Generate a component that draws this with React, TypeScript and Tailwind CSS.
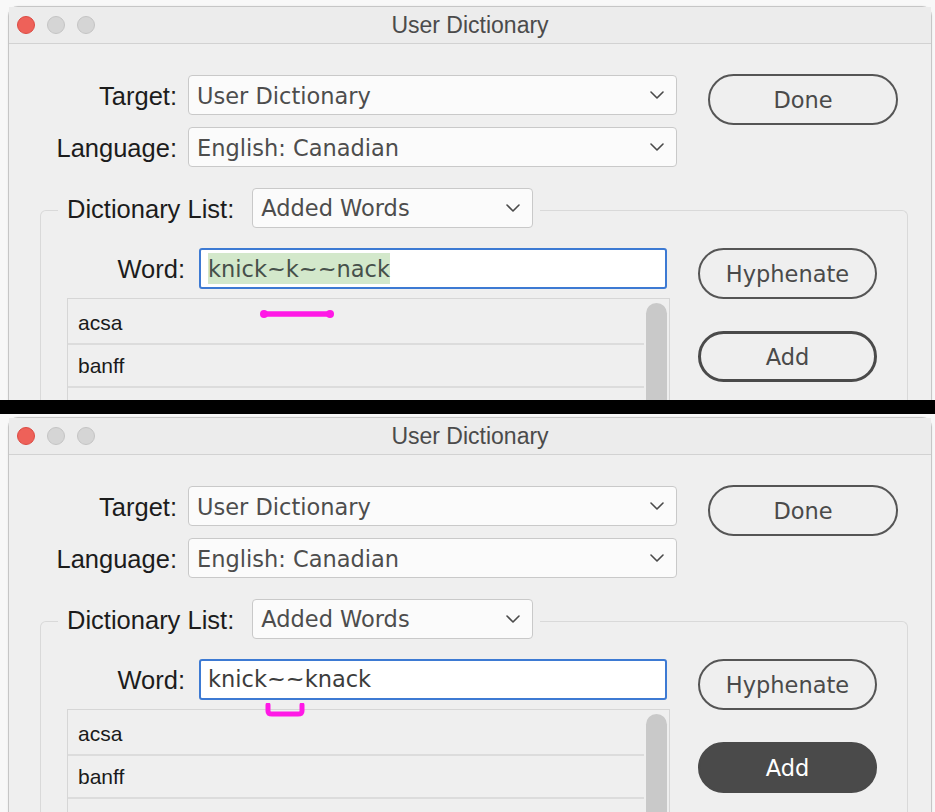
import React from 'react';

const Chevron: React.FC = () => (
  <svg width="14" height="8" viewBox="0 0 14 8" fill="none">
    <path d="M1 1 L7 7 L13 1" stroke="#4a4a4a" strokeWidth="1.6" strokeLinecap="round" strokeLinejoin="round" />
  </svg>
);

const Select: React.FC<{ value: string; className?: string }> = ({ value, className }) => (
  <div
    className={`flex h-[40px] items-center justify-between rounded-[4px] border border-[#c9c9c9] bg-[#fbfbfb] pl-[8px] pr-[12px] ${className ?? ''}`}
  >
    <span className="pt-[3px] font-['DejaVu_Sans',sans-serif] text-[22.5px] text-[#4d4d4d]">{value}</span>
    <Chevron />
  </div>
);

const Label: React.FC<{ children: React.ReactNode; className?: string }> = ({ children, className }) => (
  <span className={`pt-[2px] font-['Liberation_Sans',Arial,sans-serif] text-[25.5px] text-[#1c1c1c] ${className ?? ''}`}>
    {children}
  </span>
);

const PillButton: React.FC<{ label: string; kind: 'plain' | 'default' | 'filled'; className?: string }> = ({
  label,
  kind,
  className,
}) => {
  const look =
    kind === 'filled'
      ? 'bg-[#4a4a4a] border-2 border-[#4a4a4a] text-white'
      : kind === 'default'
        ? 'border-[3px] border-[#4a4a4a] text-[#4a4a4a]'
        : 'border-2 border-[#555555] text-[#4a4a4a]';
  return (
    <div
      className={`flex h-[51px] w-[179px] items-center justify-center rounded-full pt-[3px] font-['DejaVu_Sans',sans-serif] text-[22.5px] ${look} ${className ?? ''}`}
    >
      {label}
    </div>
  );
};

const TopMark: React.FC = () => (
  <svg className="absolute left-[191px] top-[10px]" width="76" height="10" viewBox="0 0 76 10">
    <path d="M5 5 L71 5" stroke="#ff19e6" strokeWidth="5.5" strokeLinecap="round" />
    <circle cx="5" cy="5" r="4" fill="#ff19e6" />
    <circle cx="71" cy="5" r="4" fill="#ff19e6" />
  </svg>
);

const BottomMark: React.FC = () => (
  <svg className="absolute left-[196px] top-[-7px]" width="42" height="14" viewBox="0 0 42 14">
    <path d="M4 2 L4 8 Q4 11 8 11 L34 11 Q38 11 38 8 L38 2" stroke="#ff19e6" strokeWidth="5" fill="none" strokeLinecap="round" />
  </svg>
);

const Dialog: React.FC<{ second?: boolean }> = ({ second }) => {
  return (
    <div className="ml-[8px] mr-[3px] flex flex-col rounded-t-[10px] border border-[#c6c6c6] bg-[#efefef] shadow-[0_0_2px_rgba(0,0,0,0.08)]">
      {/* title bar */}
      <div className="grid h-[37px] grid-cols-[1fr_auto_1fr] items-center border-b border-[#d2d2d2] bg-[#ececec]">
        <div className="flex items-center gap-[12px] pl-[8px]">
          <span className="h-[18px] w-[18px] rounded-full border border-[#dc4a42] bg-[#ee6159]" />
          <span className="h-[18px] w-[18px] rounded-full border border-[#c4c4c4] bg-[#d5d5d5]" />
          <span className="h-[18px] w-[18px] rounded-full border border-[#c4c4c4] bg-[#d5d5d5]" />
        </div>
        <span className="font-['Liberation_Sans',Arial,sans-serif] text-[23px] text-[#4b4b4b]">User Dictionary</span>
        <div />
      </div>

      {/* body */}
      <div className="pt-[31px]">
        <div className="flex items-start">
          <div className="grid grid-cols-[168px_489px] items-center gap-x-[11px] gap-y-[12px]">
            <Label className="text-right">Target:</Label>
            <Select value="User Dictionary" />
            <Label className="text-right">Language:</Label>
            <Select value="English: Canadian" />
          </div>
          <PillButton label="Done" kind="plain" className="ml-[31px] mt-[-1px] w-[190px]" />
        </div>

        <fieldset className="ml-[31px] mr-[23px] mt-[20px] rounded-tl-[6px] rounded-tr-[6px] border border-b-0 border-[#d9d9d9]">
          <legend className="ml-[17px] pl-[9px] pr-[7px]">
            <div className="flex items-center gap-[18px] pb-[6px]">
              <Label>Dictionary List:</Label>
              <Select value="Added Words" className="w-[281px]" />
            </div>
          </legend>

          <div className="flex gap-[28px] pl-[26px] pr-[29px] pt-[14px]">
            <div className="flex w-[603px] flex-col">
              <div className="flex items-center gap-[14px]">
                <Label className="w-[118px] text-right">Word:</Label>
                <div className="flex h-[41px] w-[468px] items-center rounded-[3px] border-2 border-[#3d7ad3] bg-white pl-[7px]">
                  {second ? (
                    <span className="pt-[2px] font-['DejaVu_Sans',sans-serif] text-[22.5px] text-[#3c3c3c]">knick~~knack</span>
                  ) : (
                    <span className="bg-[#d3e8cb] pt-[2px] leading-[29px] font-['DejaVu_Sans',sans-serif] text-[22.5px] text-[#46504a]">
                      knick~k~~nack
                    </span>
                  )}
                </div>
              </div>

              <div className="relative mt-[9px] flex h-[230px] border border-[#d6d6d6] bg-[#efefef] pt-[3px]">
                <div className="flex flex-1 flex-col">
                  {['acsa', 'banff', '', ''].map((w, i) => (
                    <div
                      key={i}
                      className="flex h-[43px] shrink-0 items-center border-b-2 border-[#dcdcdc] pl-[10px] font-['Liberation_Sans',Arial,sans-serif] text-[21px] text-[#1a1a1a]"
                    >
                      {w}
                    </div>
                  ))}
                </div>
                <div className="w-[25px] px-[2px] pt-[1px]">
                  <div className="h-[200px] w-[21px] rounded-full bg-[#c9c9c9]" />
                </div>
                {second ? <BottomMark /> : <TopMark />}
              </div>
            </div>

            <div className="flex flex-col">
              <PillButton label="Hyphenate" kind="plain" />
              <PillButton label="Add" kind={second ? 'filled' : 'default'} className="mt-[32px]" />
            </div>
          </div>
        </fieldset>
      </div>
    </div>
  );
}

export default function App() {
  return (
    <div className="h-[812px] w-[935px] overflow-hidden bg-[#f8f8f8]">
      <div className="h-[400px] overflow-hidden pt-[6px]">
        <Dialog />
      </div>
      <div className="h-[14px] bg-black" />
      <div className="h-[398px] overflow-hidden pt-[3px]">
        <Dialog second />
      </div>
    </div>
  );
}
